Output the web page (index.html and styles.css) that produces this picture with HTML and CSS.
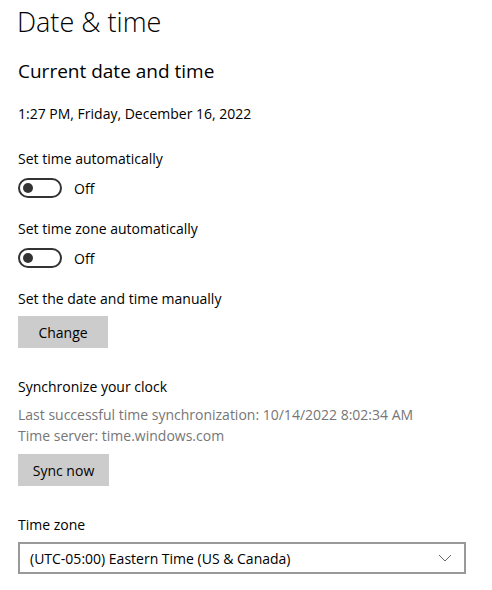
FILE: index.html
```html
<!DOCTYPE html>
<html lang="en">
<head>
    <meta charset="UTF-8">
    <meta name="viewport" content="width=device-width, initial-scale=1.0">
    <title>Date &amp; time</title>
    <link rel="stylesheet" href="styles.css">
</head>
<body>
    <div class="page">
        <h1 class="title">Date &amp; time</h1>
        <h2 class="subtitle">Current date and time</h2>
        <p class="now">1:27 PM, Friday, December 16, 2022</p>

        <div class="setting">
            <p class="label">Set time automatically</p>
            <div class="toggle-row">
                <span class="toggle"><span class="knob"></span></span>
                <span class="state">Off</span>
            </div>
        </div>

        <div class="setting">
            <p class="label">Set time zone automatically</p>
            <div class="toggle-row">
                <span class="toggle"><span class="knob"></span></span>
                <span class="state">Off</span>
            </div>
        </div>

        <div class="setting">
            <p class="label">Set the date and time manually</p>
            <button type="button" class="btn btn-change">Change</button>
        </div>

        <div class="setting section">
            <p class="label">Synchronize your clock</p>
            <div class="sync-info">
                <p>Last successful time synchronization: 10/14/2022 8:02:34 AM</p>
                <p>Time server: time.windows.com</p>
            </div>
            <button type="button" class="btn btn-sync">Sync now</button>
        </div>

        <div class="setting section">
            <p class="label">Time zone</p>
            <div class="select">
                <span>(UTC-05:00) Eastern Time (US &amp; Canada)</span>
                <svg class="chevron" width="14" height="8" viewBox="0 0 14 8">
                    <path d="M1 1 L7 7 L13 1" fill="none" stroke="#666" stroke-width="1"/>
                </svg>
            </div>
        </div>
    </div>
</body>
</html>
```

FILE: styles.css
```css
body {
    font-family: "Open Sans", "Noto Sans", sans-serif;
    margin: 0;
    padding: 0;
    background: #fff;
    color: #000;
}
p, h1, h2 {
    margin: 0;
}
.page {
    padding: 2px 0 0 18px;
    width: 448px;
}
.title {
    font-size: 27px;
    font-weight: 300;
    line-height: 40px;
    margin-left: -1px;
}
.subtitle {
    font-size: 19px;
    font-weight: 400;
    line-height: 28px;
    margin-top: 15px;
}
.now {
    font-size: 14px;
    line-height: 20px;
    margin-top: 19px;
}
.setting {
    margin-top: 24px;
}
.setting + .setting {
    margin-top: 20px;
}
.setting.section {
    margin-top: 28px;
}
.label {
    font-size: 14px;
    line-height: 22px;
}
.toggle-row {
    display: flex;
    align-items: center;
    margin-top: 8px;
    height: 20px;
}
.toggle {
    box-sizing: border-box;
    width: 44px;
    height: 20px;
    border: 2px solid #333;
    border-radius: 10px;
    display: flex;
    align-items: center;
    padding-left: 3px;
}
.knob {
    width: 10px;
    height: 10px;
    border-radius: 50%;
    background: #333;
}
.state {
    font-size: 14px;
    margin-left: 12px;
}
.btn {
    display: block;
    margin-top: 6px;
    height: 32px;
    border: none;
    background: #ccc;
    font-family: inherit;
    font-size: 14px;
    color: #000;
    padding: 0;
}
.btn-change {
    width: 90px;
}
.btn-sync {
    width: 91px;
    margin-top: 8px;
}
.sync-info {
    margin-top: 6px;
    color: #767676;
    font-size: 14px;
    line-height: 21px;
}
.select {
    box-sizing: border-box;
    margin-top: 6px;
    height: 32px;
    border: 2px solid #999;
    display: flex;
    align-items: center;
    justify-content: space-between;
    padding: 0 12px 0 10px;
    font-size: 14px;
}
.chevron {
    display: block;
}
```
